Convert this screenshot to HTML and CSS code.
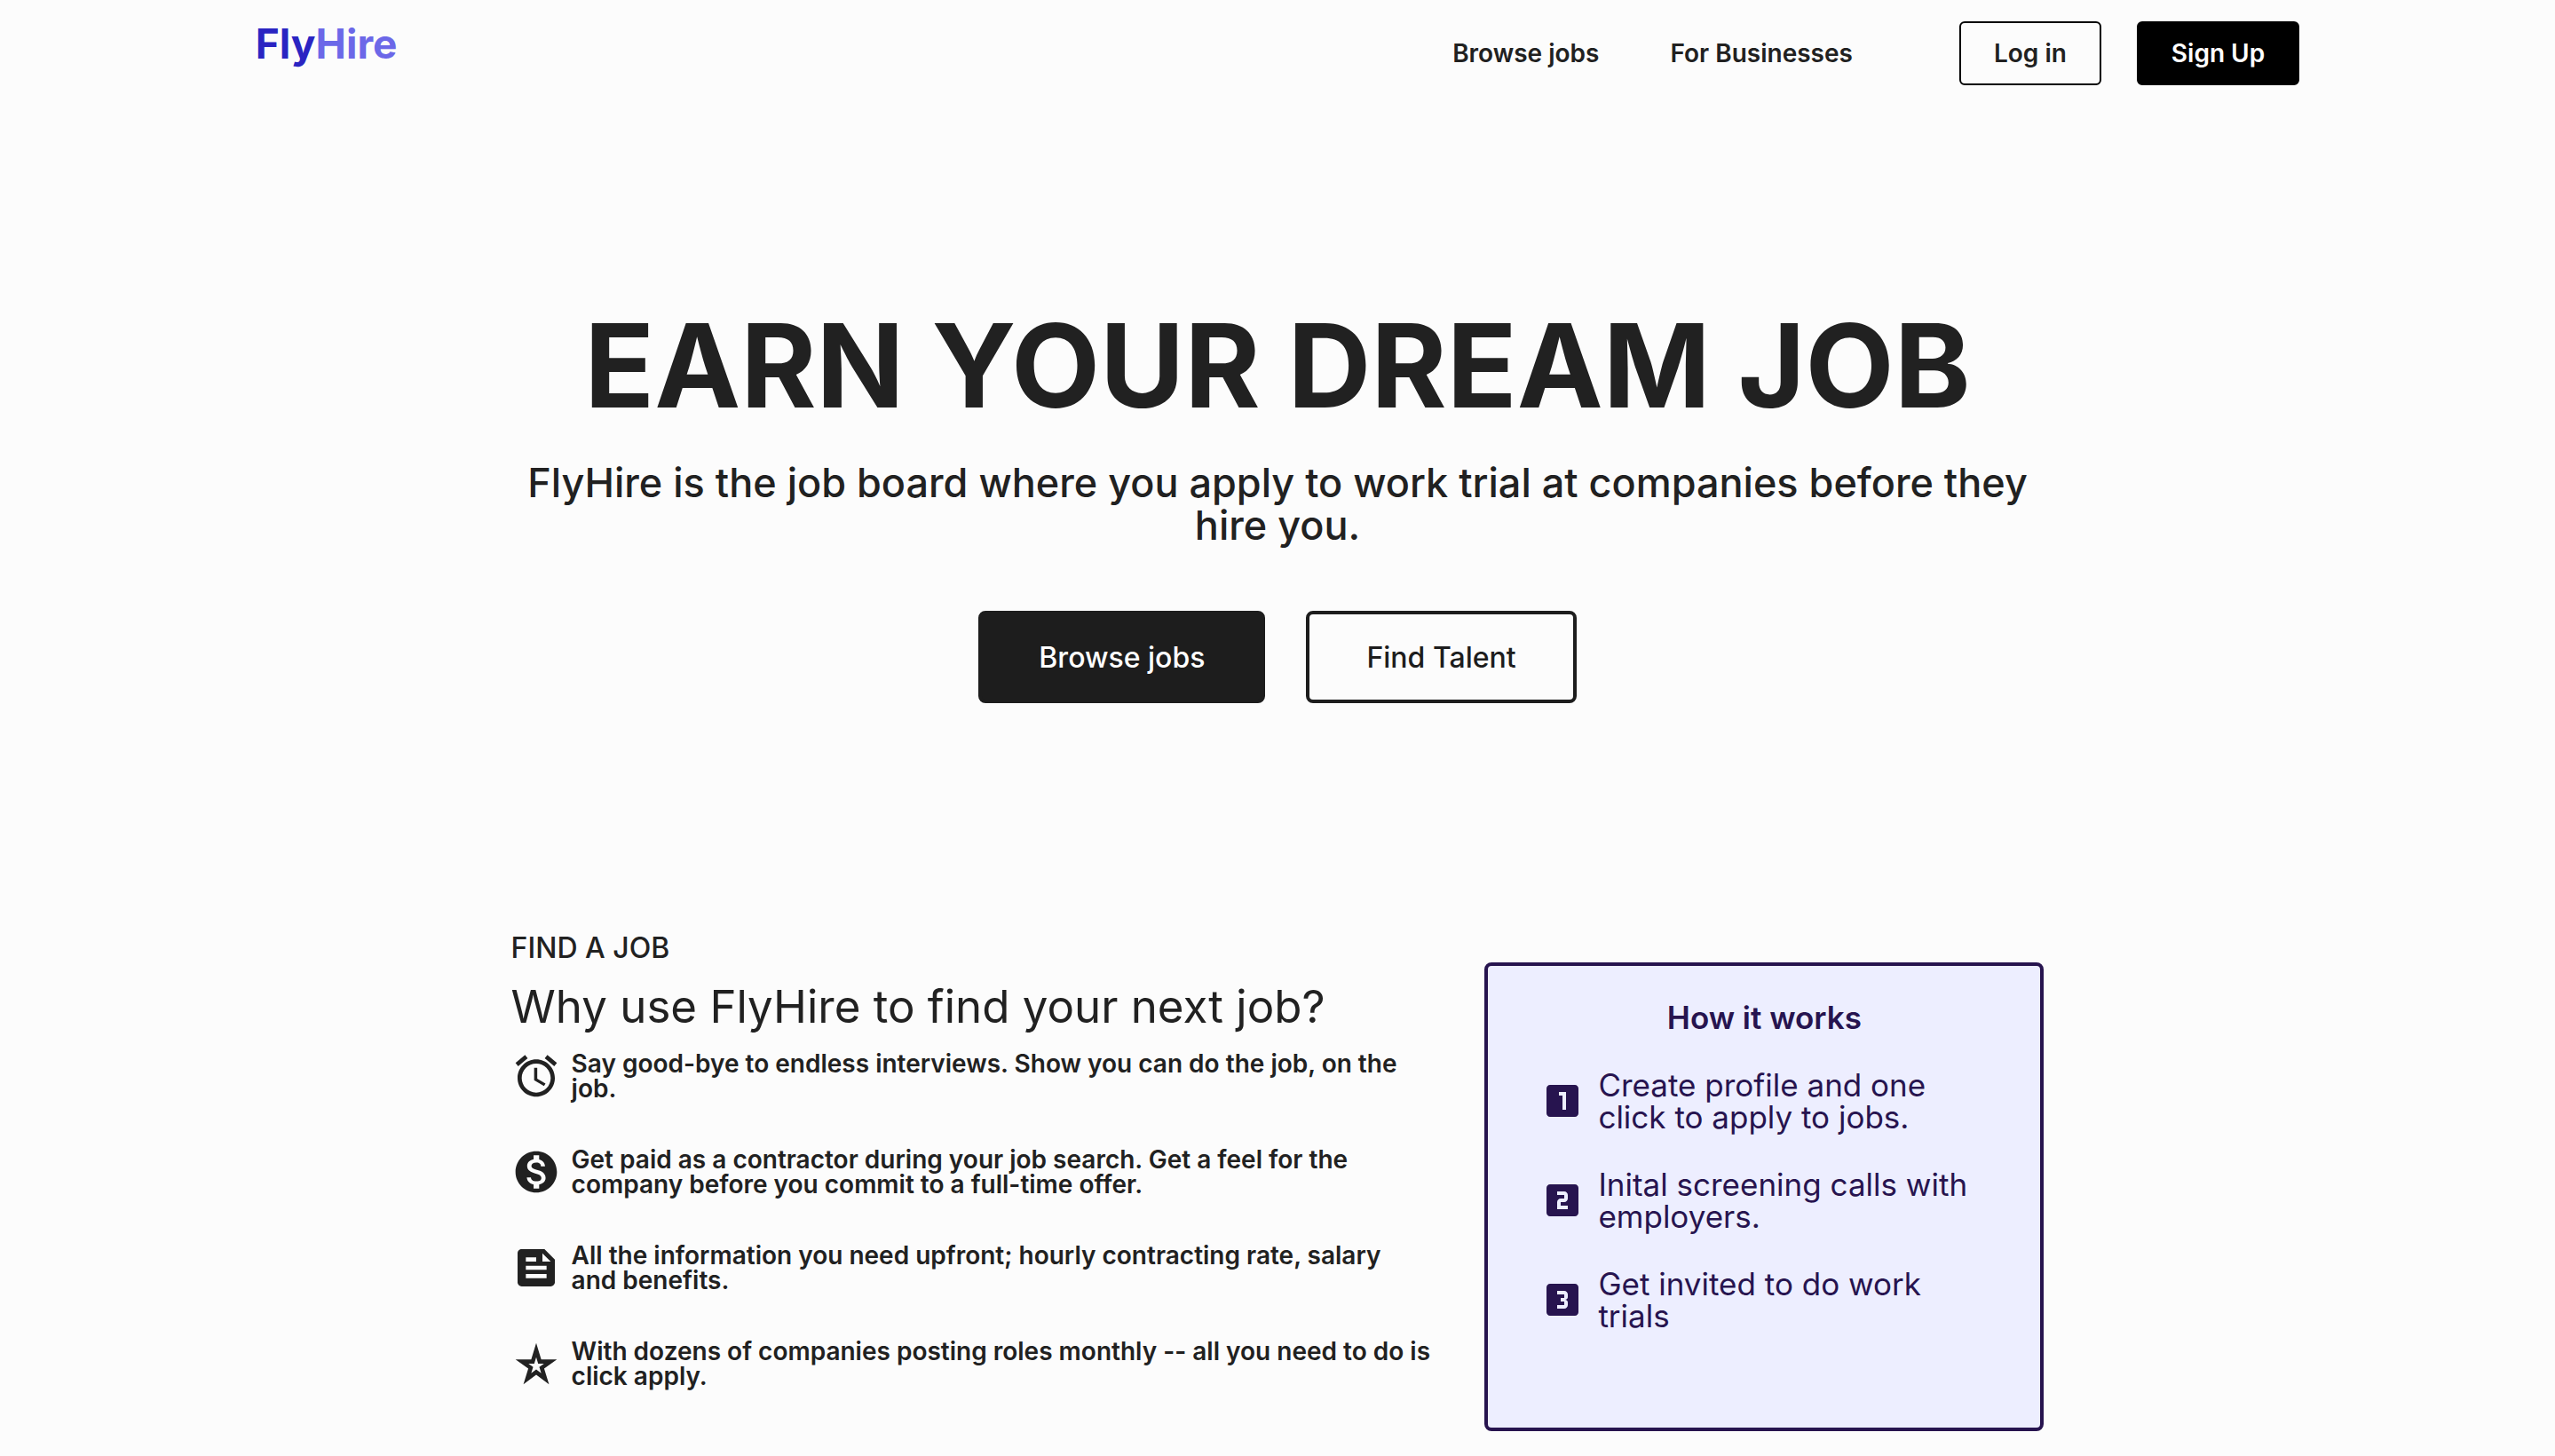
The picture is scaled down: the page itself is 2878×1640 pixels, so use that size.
FILE: index.html
```html
<!DOCTYPE html>
<html lang="en">
<head>
<meta charset="utf-8">
<meta name="viewport" content="width=device-width, initial-scale=1">
<title>FlyHire</title>
<link rel="stylesheet" href="styles.css">
</head>
<body>
<header class="header">
  <a class="logo" href="#"><span class="logo-fly">Fly</span><span class="logo-hire">Hire</span></a>
  <nav class="nav">
    <a class="nav-link" href="#">Browse jobs</a>
    <a class="nav-link" href="#">For Businesses</a>
    <div class="account">
      <button class="btn btn-login" type="button">Log in</button>
      <button class="btn btn-signup" type="button">Sign Up</button>
    </div>
  </nav>
</header>
<main class="main">
  <section class="hero">
    <h1 class="hero-title">EARN YOUR DREAM JOB</h1>
    <p class="hero-text">FlyHire is the job board where you apply to work trial at companies before they hire you.</p>
    <div class="hero-actions">
      <button class="cta cta-dark" type="button">Browse jobs</button>
      <button class="cta cta-light" type="button">Find Talent</button>
    </div>
  </section>
  <section class="why">
    <div class="reasons">
      <p class="eyebrow">FIND A JOB</p>
      <h2 class="why-title">Why use FlyHire to find your next job?</h2>
      <ul class="reason-list">
        <li class="reason">
          <svg class="reason-icon" viewBox="0 0 24 24" aria-hidden="true"><path d="M22 5.72l-4.6-3.86-1.29 1.53 4.6 3.86L22 5.72zM7.88 3.39L6.6 1.86 2 5.71l1.29 1.53 4.59-3.85zM12.5 8H11v6l4.75 2.85.75-1.23-4-2.37V8zM12 4c-4.97 0-9 4.03-9 9s4.02 9 9 9c4.97 0 9-4.03 9-9s-4.03-9-9-9zm0 16c-3.87 0-7-3.13-7-7s3.13-7 7-7 7 3.13 7 7-3.13 7-7 7z"/></svg>
          <span>Say good-bye to endless interviews. Show you can do the job, on the job.</span>
        </li>
        <li class="reason">
          <svg class="reason-icon" viewBox="0 0 24 24" aria-hidden="true"><path d="M12 2C6.48 2 2 6.48 2 12s4.48 10 10 10 10-4.48 10-10S17.52 2 12 2zm1.41 16.09V20h-2.67v-1.93c-1.71-.36-3.16-1.46-3.27-3.4h1.96c.1 1.05.82 1.87 2.65 1.87 1.96 0 2.4-.98 2.4-1.59 0-.83-.44-1.61-2.67-2.14-2.48-.6-4.18-1.62-4.18-3.67 0-1.72 1.39-2.84 3.11-3.21V4h2.67v1.95c1.86.45 2.79 1.86 2.85 3.39H14.3c-.05-1.11-.64-1.87-2.22-1.87-1.5 0-2.4.68-2.4 1.64 0 .84.65 1.39 2.67 1.91s4.18 1.39 4.18 3.91c-.01 1.83-1.38 2.83-3.12 3.16z"/></svg>
          <span>Get paid as a contractor during your job search. Get a feel for the company before you commit to a full-time offer.</span>
        </li>
        <li class="reason">
          <svg class="reason-icon" viewBox="0 0 24 24" aria-hidden="true"><path d="M16 3H5c-1.1 0-2 .9-2 2v14c0 1.1.9 2 2 2h14c1.1 0 2-.9 2-2V8l-5-5zM7 7h5v2H7V7zm10 10H7v-2h10v2zm0-4H7v-2h10v2zm-2-4V5l4 4h-4z"/></svg>
          <span>All the information you need upfront; hourly contracting rate, salary and&nbsp;benefits.</span>
        </li>
        <li class="reason">
          <svg class="reason-icon" viewBox="0 0 24 24" aria-hidden="true"><path d="M12 8.89L12.94 12h2.82l-2.27 1.62.93 3.01L12 14.79l-2.42 1.84.93-3.01L8.24 12h2.82L12 8.89M12 2l-2.42 8H2l6.17 4.41L5.83 22 12 17.31 18.18 22l-2.35-7.59L22 10h-7.58L12 2z"/></svg>
          <span>With dozens of companies posting roles monthly -- all you need to do is click apply.</span>
        </li>
      </ul>
    </div>
    <aside class="card">
      <h3 class="card-title">How it works</h3>
      <ol class="steps">
        <li class="step">
          <svg class="step-icon" viewBox="0 0 24 24" aria-hidden="true"><path d="M19 3H5c-1.1 0-2 .9-2 2v14c0 1.1.9 2 2 2h14c1.1 0 2-.9 2-2V5c0-1.1-.9-2-2-2zm-5 14h-2V9h-2V7h4v10z"/></svg>
          <span>Create profile and one click to apply to jobs.</span>
        </li>
        <li class="step">
          <svg class="step-icon" viewBox="0 0 24 24" aria-hidden="true"><path d="M19 3H5c-1.1 0-2 .9-2 2v14c0 1.1.9 2 2 2h14c1.1 0 2-.9 2-2V5c0-1.1-.9-2-2-2zm-4 8c0 1.11-.9 2-2 2h-2v2h4v2H9v-4c0-1.11.9-2 2-2h2V9H9V7h4c1.1 0 2 .89 2 2v2z"/></svg>
          <span>Inital screening calls with employers.</span>
        </li>
        <li class="step">
          <svg class="step-icon" viewBox="0 0 24 24" aria-hidden="true"><path d="M19 3H5c-1.1 0-2 .9-2 2v14c0 1.1.9 2 2 2h14c1.1 0 2-.9 2-2V5c0-1.1-.9-2-2-2zm-4 7.5c0 .83-.67 1.5-1.5 1.5.83 0 1.5.67 1.5 1.5V15c0 1.11-.9 2-2 2H9v-2h4v-2h-2v-2h2V9H9V7h4c1.1 0 2 .89 2 2v1.5z"/></svg>
          <span>Get invited to do work trials</span>
        </li>
      </ol>
    </aside>
  </section>
</main>
</body>
</html>
```
FILE: styles.css
```css
* {
  box-sizing: border-box;
}

body {
  margin: 0;
  background: #fcfcfc;
  color: #212121;
  font-family: Inter, "Liberation Sans", sans-serif;
}

h1, h2, h3, p, ul, ol {
  margin: 0;
  padding: 0;
}

ul, ol {
  list-style: none;
}

a {
  color: inherit;
  text-decoration: none;
}

button {
  font: inherit;
  color: inherit;
  cursor: pointer;
}

svg {
  fill: currentColor;
  flex: none;
}

.header {
  display: flex;
  justify-content: space-between;
  align-items: flex-start;
  width: 80%;
  margin: 0 auto;
  padding: 24px 0;
}

.logo {
  font-size: 46px;
  line-height: 50px;
  font-weight: 700;
}

.logo-fly {
  color: #2a24c2;
}

.logo-hire {
  color: #6c68e8;
}

.nav {
  display: flex;
  align-items: center;
  gap: 80px;
  font-size: 28px;
  line-height: 28px;
  font-weight: 600;
}

.account {
  display: flex;
  gap: 40px;
  margin-left: 40px;
}

.btn {
  height: 72px;
  padding: 0 37px;
  border: 2px solid #000;
  border-radius: 6px;
}

.btn-login {
  background: transparent;
}

.btn-signup {
  background: #000;
  color: #fff;
}

.main {
  width: 60%;
  margin: 0 auto;
}

.hero {
  padding: 224px 0 260px;
  text-align: center;
}

.hero-title {
  font-size: 130px;
  line-height: 136px;
  font-weight: 700;
}

.hero-text {
  margin-top: 40px;
  font-size: 45px;
  line-height: 48px;
  font-weight: 500;
}

.hero-actions {
  display: flex;
  justify-content: center;
  gap: 46px;
  margin-top: 72px;
  font-size: 32px;
  font-weight: 500;
}

.cta {
  height: 104px;
  padding: 0 64px;
  border: 4px solid #1d1d1d;
  border-radius: 8px;
}

.cta-dark {
  background: #1d1d1d;
  color: #fff;
}

.cta-light {
  background: transparent;
  color: #1d1d1d;
}

.why {
  display: grid;
  grid-template-columns: 1fr 630px;
  align-items: start;
  column-gap: 48px;
}

.eyebrow {
  font-size: 32px;
  line-height: 32px;
  font-weight: 500;
}

.why-title {
  margin-top: 22px;
  font-size: 51px;
  line-height: 56px;
  font-weight: 400;
}

.reason-list {
  display: grid;
  gap: 52px;
  margin-top: 22px;
}

.reason {
  display: flex;
  align-items: center;
  gap: 12px;
  font-size: 28px;
  line-height: 28px;
  font-weight: 600;
}

.reason-icon {
  width: 56px;
  height: 56px;
}

.card {
  margin-top: 32px;
  padding: 40px 60px 108px;
  border: 4px solid #27144f;
  border-radius: 8px;
  background: #edeeff;
  color: #27144f;
}

.card-title {
  font-size: 35px;
  line-height: 36px;
  font-weight: 600;
  text-align: center;
}

.steps {
  display: grid;
  gap: 40px;
  margin-top: 40px;
}

.step {
  display: flex;
  align-items: center;
  gap: 16px;
  font-size: 35px;
  line-height: 36px;
}

.step-icon {
  width: 48px;
  height: 48px;
}
```
